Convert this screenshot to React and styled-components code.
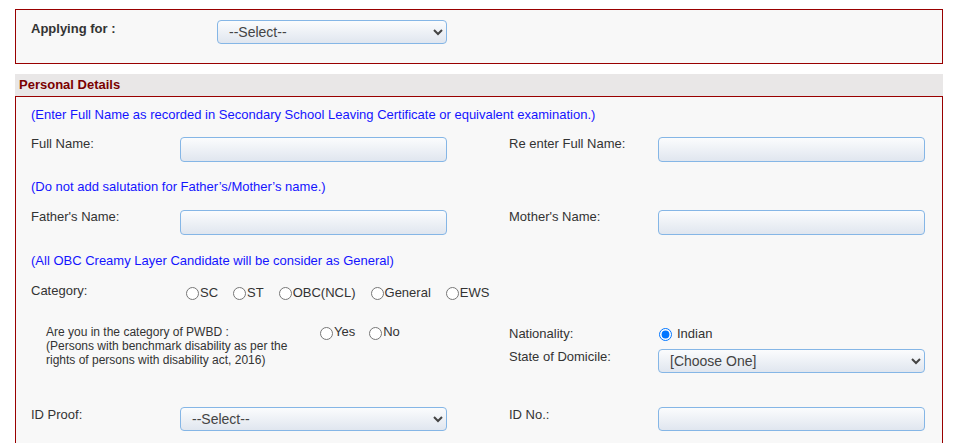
import React from 'react';
import styled, { createGlobalStyle } from 'styled-components';

const GlobalStyle = createGlobalStyle`
  html, body {
    margin: 0;
    padding: 0;
    background: #fff;
    font-family: "Liberation Sans", Arial, sans-serif;
    font-size: 13px;
    color: #333;
  }
`;

const Page = styled.div`
  padding: 9px 0 0 15px;
  width: 928px;
`;

const Panel = styled.div`
  border: 1px solid #990000;
  background: #f8f8f8;
  padding: ${({ pad }) => pad || '10px 17px 19px 15px'};
`;

const TopRow = styled.div`
  display: grid;
  grid-template-columns: 186px 230px;
  align-items: start;
`;

const BoldLabel = styled.label`
  font-weight: bold;
  line-height: 16px;
  padding-top: 1px;
  color: #333;
`;

const SectionHead = styled.div`
  margin-top: 10px;
  height: 22px;
  line-height: 21px;
  padding-left: 4px;
  background: #e9e7e7;
  color: #7a0000;
  font-weight: bold;
`;

const Note = styled.div`
  color: #1414ff;
  line-height: 18px;
  margin-top: ${({ top }) => top || 0}px;
`;

const Row = styled.div`
  display: grid;
  grid-template-columns: 149px 267px 62px 149px 267px;
  align-items: start;
  margin-top: ${({ top }) => top || 0}px;
`;

const Label = styled.label`
  line-height: 14px;
  padding-top: ${({ pt }) => pt || 0}px;
  color: #333;
  grid-column: ${({ col }) => col || 'auto'};
`;

const fieldBase = `
  box-sizing: border-box;
  width: 100%;
  border: 1px solid #85b6e6;
  border-radius: 4px;
  background: linear-gradient(#fbfcfd, #e0e6ef);
  font-family: "Liberation Sans", Arial, sans-serif;
  color: #444;
  outline: none;
`;

const TextInput = styled.input`
  ${fieldBase}
  height: ${({ h }) => h || 25}px;
  padding: 0 6px;
  font-size: 13px;
  grid-column: ${({ col }) => col || 'auto'};
`;

const Select = styled.select`
  ${fieldBase}
  height: 24px;
  padding: 0 6px 0 7px;
  font-size: 14px;
  grid-column: ${({ col }) => col || 'auto'};
`;

const RadioGroup = styled.div`
  display: flex;
  align-items: center;
  align-self: start;
  gap: ${({ gap }) => gap || 14}px;
  padding-left: ${({ pl }) => pl || 0}px;
  padding-top: ${({ pt }) => pt || 0}px;
  grid-column: ${({ col }) => col || 'auto'};
`;

const RadioItem = styled.label`
  display: flex;
  align-items: ${({ top }) => (top ? 'flex-start' : 'center')};
  line-height: 14px;
  color: #333;
  font-size: 13px;
`;

const Radio = styled.input.attrs({ type: 'radio' })`
  width: 13px;
  height: 13px;
  margin: ${({ mt }) => mt || 0}px ${({ mr }) => mr || 1}px 0 0;
`;

const PwbdCell = styled.div`
  grid-column: 1 / span 3;
  display: flex;
  align-items: flex-start;
`;

const PwbdText = styled.div`
  width: 289px;
  padding-left: 15px;
  box-sizing: border-box;
  font-size: 12px;
  line-height: 14px;
  color: #333;
`;

const Stack = styled.div`
  display: grid;
  grid-template-rows: 24px 24px;
  grid-column: ${({ col }) => col};
`;

const categories = ['SC', 'ST', 'OBC(NCL)', 'General', 'EWS'];

export default function App() {
  return (
    <>
      <GlobalStyle />
      <Page>
        <Panel>
          <TopRow>
            <BoldLabel>Applying for :</BoldLabel>
            <Select>
              <option>--Select--</option>
            </Select>
          </TopRow>
        </Panel>

        <SectionHead>Personal Details</SectionHead>
        <Panel pad="9px 17px 14px 15px">
          <Note>(Enter Full Name as recorded in Secondary School Leaving Certificate or equivalent examination.)</Note>
          <Row top={13}>
            <Label>Full Name:</Label>
            <TextInput />
            <Label col={4}>Re enter Full Name:</Label>
            <TextInput />
          </Row>

          <Note top={16}>(Do not add salutation for Father’s/Mother’s name.)</Note>
          <Row top={14}>
            <Label>Father's Name:</Label>
            <TextInput />
            <Label col={4}>Mother's Name:</Label>
            <TextInput />
          </Row>

          <Note top={17}>(All OBC Creamy Layer Candidate will be consider as General)</Note>
          <Row top={14}>
            <Label>Category:</Label>
            <RadioGroup gap={15} pl={6} pt={2} col="2 / span 2">
              {categories.map((c) => (
                <RadioItem key={c}>
                  <Radio name="category" mr={1} />
                  {c}
                </RadioItem>
              ))}
            </RadioGroup>
          </Row>

          <Row top={25}>
            <PwbdCell>
              <PwbdText>
                Are you in the category of PWBD :<br />
                (Persons with benchmark disability as per the rights of persons with disability act, 2016)
              </PwbdText>
              <RadioGroup gap={14}>
                <RadioItem top>
                  <Radio name="pwbd" mt={2} />
                  Yes
                </RadioItem>
                <RadioItem top>
                  <Radio name="pwbd" mt={2} />
                  No
                </RadioItem>
              </RadioGroup>
            </PwbdCell>
            <Stack col={4}>
              <Label pt={2}>Nationality:</Label>
              <Label pt={1}>State of Domicile:</Label>
            </Stack>
            <Stack col={5}>
              <RadioGroup pt={2} pl={1}>
                <RadioItem>
                  <Radio name="nationality" defaultChecked mr={5} />
                  Indian
                </RadioItem>
              </RadioGroup>
              <Select>
                <option>[Choose One]</option>
              </Select>
            </Stack>
          </Row>

          <Row top={34}>
            <Label pt={1}>ID Proof:</Label>
            <Select>
              <option>--Select--</option>
            </Select>
            <Label col={4} pt={1}>ID No.:</Label>
            <TextInput h={24} />
          </Row>
        </Panel>
      </Page>
    </>
  );
}
